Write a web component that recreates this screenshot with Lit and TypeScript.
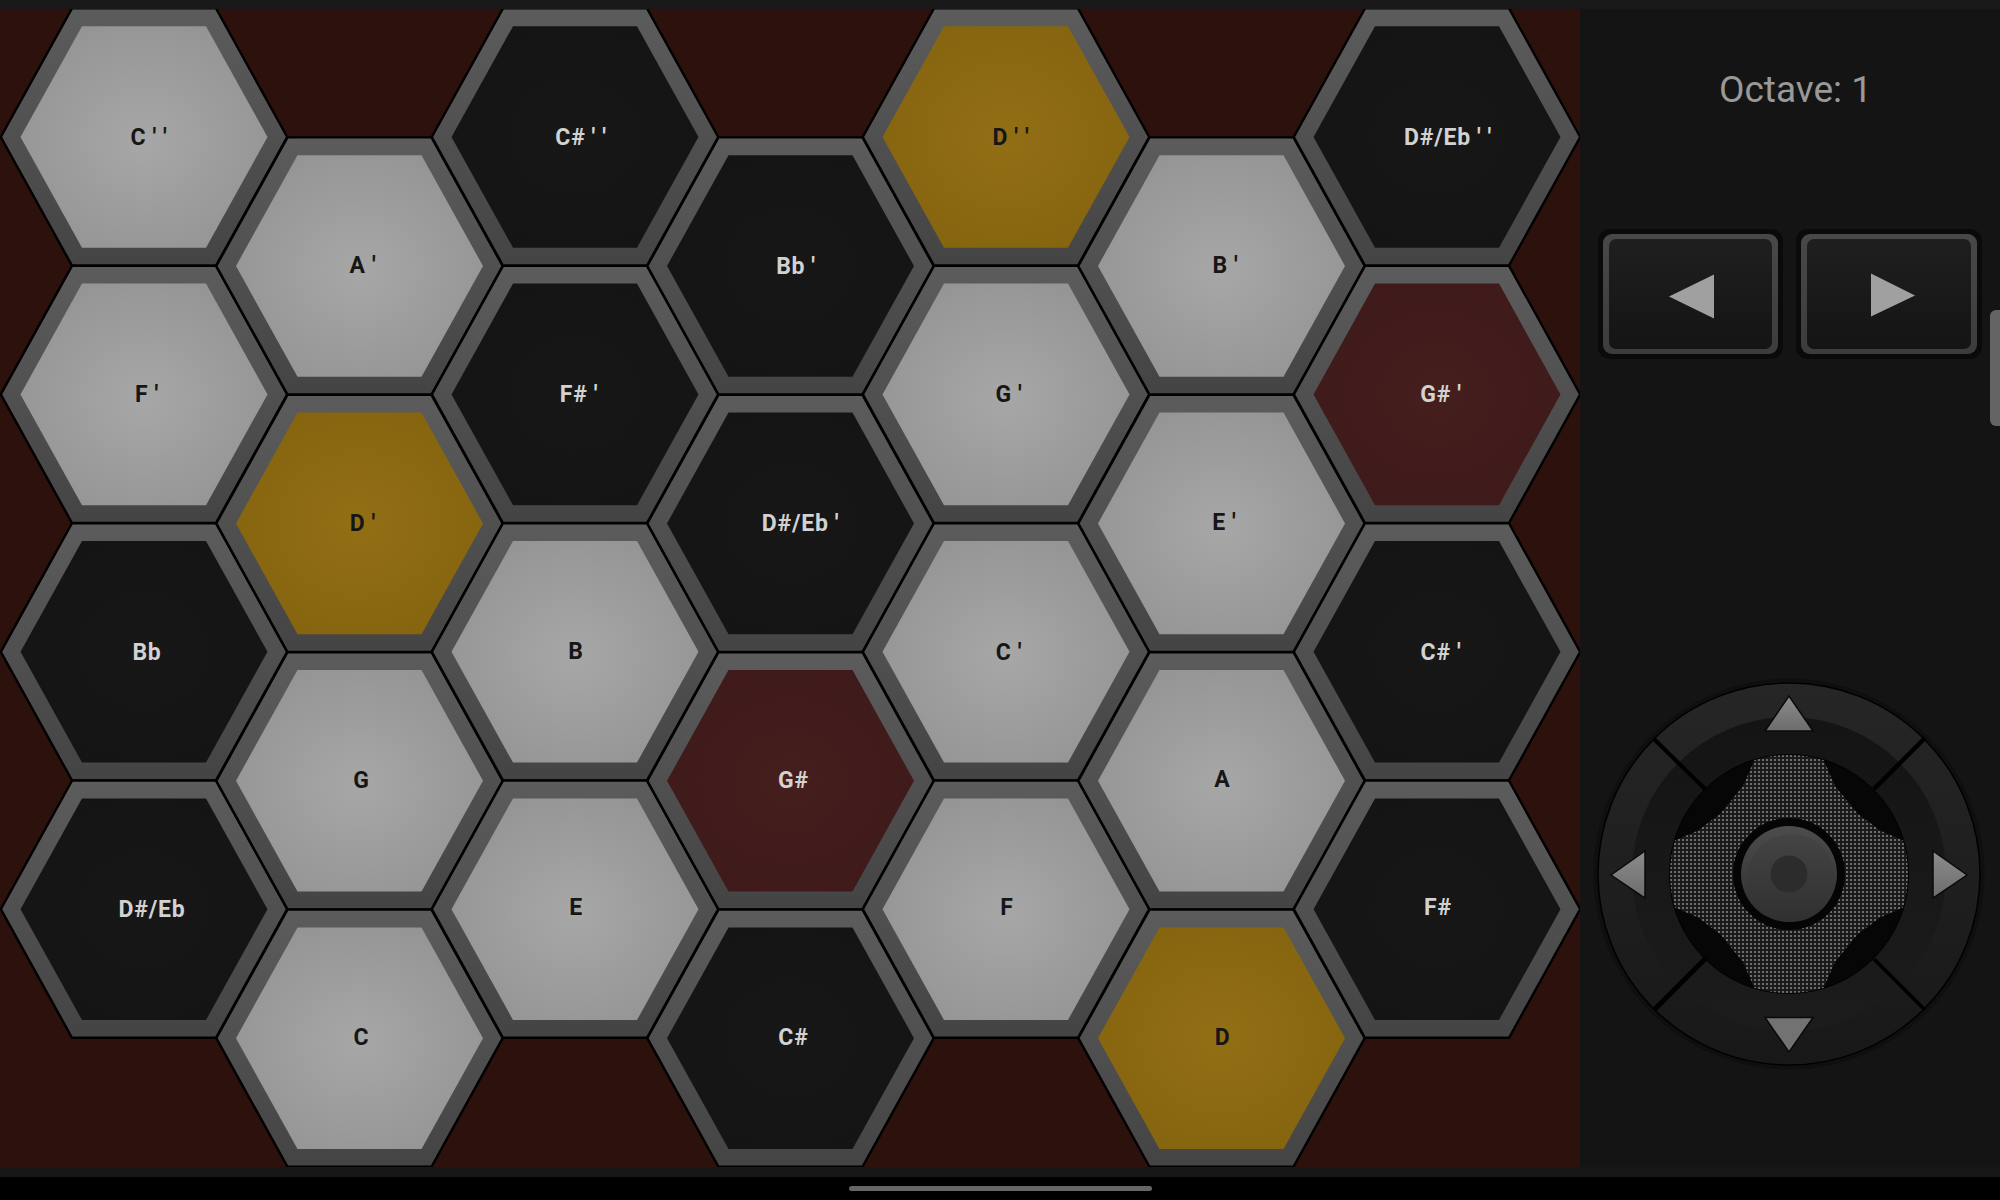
import { LitElement, html, css, svg } from "lit";
import { customElement } from "lit/decorators.js";

type Kind = "w" | "k" | "g" | "r";
interface Hex { c: number; r: number; k: Kind; t: string; dx: number; dy: number; }

const HEXES: Hex[] = [
  { c: 0, r: 0, k: "w", t: "C ' '", dx: 5, dy: 8 },
  { c: 0, r: 1, k: "w", t: "F '", dx: 3, dy: 8 },
  { c: 0, r: 2, k: "k", t: "Bb", dx: 3, dy: 8 },
  { c: 0, r: 3, k: "k", t: "D#/Eb", dx: 8, dy: 8 },
  { c: 1, r: 0, k: "w", t: "A '", dx: 3.500, dy: 7 },
  { c: 1, r: 1, k: "g", t: "D '", dx: 3.500, dy: 8 },
  { c: 1, r: 2, k: "w", t: "G", dx: 2, dy: 7 },
  { c: 1, r: 3, k: "w", t: "C", dx: 2, dy: 7 },
  { c: 2, r: 0, k: "k", t: "C# ' '", dx: 6, dy: 8 },
  { c: 2, r: 1, k: "k", t: "F# '", dx: 4, dy: 8 },
  { c: 2, r: 2, k: "w", t: "B", dx: 1, dy: 7 },
  { c: 2, r: 3, k: "w", t: "E", dx: 1, dy: 6 },
  { c: 3, r: 0, k: "k", t: "Bb '", dx: 5.500, dy: 8 },
  { c: 3, r: 1, k: "k", t: "D#/Eb '", dx: 10, dy: 8 },
  { c: 3, r: 2, k: "r", t: "G#", dx: 3, dy: 7 },
  { c: 3, r: 3, k: "k", t: "C#", dx: 3, dy: 7 },
  { c: 4, r: 0, k: "g", t: "D ' '", dx: 5, dy: 8 },
  { c: 4, r: 1, k: "w", t: "G '", dx: 3, dy: 8 },
  { c: 4, r: 2, k: "w", t: "C '", dx: 3, dy: 8 },
  { c: 4, r: 3, k: "w", t: "F", dx: 1, dy: 6 },
  { c: 5, r: 0, k: "w", t: "B '", dx: 4, dy: 7 },
  { c: 5, r: 1, k: "w", t: "E '", dx: 3, dy: 7 },
  { c: 5, r: 2, k: "w", t: "A", dx: 1, dy: 6 },
  { c: 5, r: 3, k: "g", t: "D", dx: 1, dy: 7 },
  { c: 6, r: 0, k: "k", t: "D#/Eb ' '", dx: 11, dy: 8 },
  { c: 6, r: 1, k: "r", t: "G# '", dx: 4, dy: 8 },
  { c: 6, r: 2, k: "k", t: "C# '", dx: 4, dy: 8 },
  { c: 6, r: 3, k: "k", t: "F#", dx: 1, dy: 6 },
];

const hexPoints = (x: number, y: number, hw: number, he: number, hh: number) =>
  `${x - hw},${y} ${x - he},${y - hh} ${x + he},${y - hh} ${x + hw},${y} ${x + he},${y + hh} ${x - he},${y + hh}`;

const FILL: Record<Kind, string> = { w: "url(#fw)", k: "url(#fk)", g: "url(#fg)", r: "url(#fr)" };

function hexCell(h: Hex) {
  const x = 144 + h.c * 215.5;
  const rowBase = h.c % 2 === 0 ? 128 : 257;
  const y = rowBase + h.r * 257.4;
  const ink = h.k === "w" || h.k === "g" ? "#161616" : "#d2d2d2";
  return svg`
    <polygon points=${hexPoints(x, y, 143.2, 72, 128.6)} fill="url(#rim)" stroke="#000" stroke-width="2.4" stroke-linejoin="miter"></polygon>
    <polygon points=${hexPoints(x, y, 123.5, 62, 110.8)} fill=${FILL[h.k]}></polygon>
    <text x=${x + h.dx} y=${y + h.dy} text-anchor="middle" fill=${ink} class="lbl">${h.t}</text>`;
}

@customElement("app-root")
export class AppRoot extends LitElement {
  static styles = css`
    :host { display: block; width: 2000px; height: 1200px; background: #000; position: relative; overflow: hidden; font-family: Roboto, "Liberation Sans", sans-serif; }
    .top { height: 9px; background: #181818; }
    .main { display: flex; height: 1158px; }
    .board { width: 1580px; height: 1158px; flex: none; display: block; background: #2c110d; }
    .lbl { font-family: Roboto, "Liberation Sans", sans-serif; font-weight: 700; font-size: 23px; letter-spacing: 0.8px; word-spacing: -0.5px; }
    .side { flex: 1; background: #141414; display: flex; flex-direction: column; }
    .octave { height: 171px; padding-top: 58px; box-sizing: border-box; padding-left: 139px; font-size: 37px; line-height: 46px; color: #999; font-weight: 400; white-space: nowrap; }
    .btns { display: flex; gap: 13px; padding: 49px 0 0 18px; }
    .btn { width: 185px; height: 130px; box-sizing: border-box; background: #0a0a0a; border-radius: 12px; padding: 5px; }
    .btn.r { width: 186px; }
    .ring { height: 100%; box-sizing: border-box; border-radius: 9px; padding: 5px 6px; background: linear-gradient(#484848, #3c3c3c); }
    .face { height: 100%; border-radius: 7px; background: linear-gradient(#1f1f1f, #141414); }
    .face svg { display: block; width: 100%; height: 100%; }
    .joy { display: block; width: 400px; height: 400px; margin: 315px 0 0 9px; flex: none; }
    .bar { height: 10px; background: #171717; }
    .nav { height: 23px; display: flex; justify-content: center; padding-top: 9px; box-sizing: border-box; }
    .pill { width: 303px; height: 5px; border-radius: 3px; background: #666; }
    .tab { position: absolute; right: 0; top: 310px; width: 10px; height: 116px; border-radius: 6px 0 0 6px; background: #646464; }
  `;

  render() {
    const diag = [
      { a: [-84, -85], b: [-135, -135], w: 4 },
      { a: [85, -85], b: [136, -136], w: 4.5 },
      { a: [-84, 85], b: [-135, 136], w: 5 },
      { a: [85, 85], b: [136, 136], w: 3.5 },
    ];
    const q = [[32, 120], [46, 88], [69, 60], [92, 43], [120, 31]];
    const star = [
      ...q.map(([x, y]) => `${x},${-y}`),
      ...[...q].reverse().map(([x, y]) => `${x},${y}`),
      ...q.map(([x, y]) => `${-x},${y}`),
      ...[...q].reverse().map(([x, y]) => `${-x},${-y}`),
    ].join(" ");
    return html`
      <div class="top"></div>
      <div class="main">
        <svg class="board" viewBox="0 0 1580 1158">
          <defs>
            <linearGradient id="rim" x1="0" y1="0" x2="0" y2="1">
              <stop offset="0" stop-color="#5c5c5c"></stop><stop offset="1" stop-color="#444"></stop>
            </linearGradient>
            <radialGradient id="fw" cx="0.5" cy="0.52" r="0.62">
              <stop offset="0" stop-color="#a7a7a7"></stop><stop offset="1" stop-color="#939393"></stop>
            </radialGradient>
            <radialGradient id="fk" cx="0.5" cy="0.5" r="0.6">
              <stop offset="0" stop-color="#171717"></stop><stop offset="1" stop-color="#141414"></stop>
            </radialGradient>
            <radialGradient id="fg" cx="0.5" cy="0.5" r="0.6">
              <stop offset="0" stop-color="#926f15"></stop><stop offset="1" stop-color="#85640f"></stop>
            </radialGradient>
            <radialGradient id="fr" cx="0.5" cy="0.5" r="0.6">
              <stop offset="0" stop-color="#451e1e"></stop><stop offset="1" stop-color="#3f1a1a"></stop>
            </radialGradient>
          </defs>
          ${HEXES.map(hexCell)}
        </svg>
        <div class="side">
          <div class="octave">Octave: 1</div>
          <div class="btns">
            <div class="btn"><div class="ring"><div class="face">
              <svg viewBox="0 0 163 109"><polygon points="60,57 105,35 105,79" fill="#a0a0a0"></polygon></svg>
            </div></div></div>
            <div class="btn r"><div class="ring"><div class="face">
              <svg viewBox="0 0 164 109"><polygon points="64,34 64,77 108,56" fill="#a0a0a0"></polygon></svg>
            </div></div></div>
          </div>
          <svg class="joy" viewBox="-200 -200 400 400">
            <defs>
              <linearGradient id="jo" x1="0" y1="0" x2="0" y2="1"><stop offset="0" stop-color="#262626"></stop><stop offset="1" stop-color="#181818"></stop></linearGradient>
              <linearGradient id="ji" x1="0" y1="0" x2="0" y2="1"><stop offset="0" stop-color="#141414"></stop><stop offset="1" stop-color="#1c1c1c"></stop></linearGradient>
              <linearGradient id="ja" x1="0" y1="0" x2="0" y2="1"><stop offset="0" stop-color="#8c8c8c"></stop><stop offset="1" stop-color="#6c6c6c"></stop></linearGradient>
              <linearGradient id="jk" x1="0" y1="0" x2="0" y2="1"><stop offset="0" stop-color="#4c4c4c"></stop><stop offset="1" stop-color="#2e2e2e"></stop></linearGradient>
              <linearGradient id="jh" x1="0" y1="0" x2="0" y2="1"><stop offset="0" stop-color="#444"></stop><stop offset="1" stop-color="#303030"></stop></linearGradient>
              <pattern id="dots" x="0" y="0" width="4" height="4" patternUnits="userSpaceOnUse">
                <rect width="4" height="4" fill="#1a1a1a"></rect>
                <rect x="1" y="1" width="2" height="2" fill="#6e6e6e"></rect>
              </pattern>
              <clipPath id="disc"><circle r="119"></circle></clipPath>
            </defs>
            <circle r="195.5" fill="#0f0f0f"></circle>
            <circle r="191" fill="url(#jo)" stroke="#000" stroke-width="1.5"></circle>
            <circle r="157" fill="url(#ji)"></circle>
            ${diag.map(d => svg`<line x1=${d.a[0]} y1=${d.a[1]} x2=${d.b[0]} y2=${d.b[1]} stroke="#000" stroke-width=${d.w}></line>`)}
            <circle r="119.5" fill="#060606" stroke="#000" stroke-width="1"></circle>
            <g clip-path="url(#disc)">
              <polygon fill="url(#dots)" points=${star}></polygon>
            </g>
            <circle r="56" fill="#050505"></circle>
            <circle r="48" fill="url(#jk)"></circle>
            <circle cx="2" cy="4" r="44" fill="url(#jh)"></circle>
            <circle r="18.5" fill="#2c2c2c"></circle>
            <polygon points="0,-178 24,-143 -24,-143" fill="url(#ja)" stroke="#0a0a0a" stroke-width="1.5"></polygon>
            <polygon points="0,178 24,143.500 -24,143.500" fill="#727272" stroke="#0a0a0a" stroke-width="1.5"></polygon>
            <polygon points="-178,1 -144,-23 -144,24" fill="url(#ja)" stroke="#0a0a0a" stroke-width="1.5"></polygon>
            <polygon points="178,1 144,-23 144,24" fill="url(#ja)" stroke="#0a0a0a" stroke-width="1.5"></polygon>
          </svg>
        </div>
      </div>
      <div class="bar"></div>
      <div class="nav"><div class="pill"></div></div>
      <div class="tab"></div>
    `;
  }
}
